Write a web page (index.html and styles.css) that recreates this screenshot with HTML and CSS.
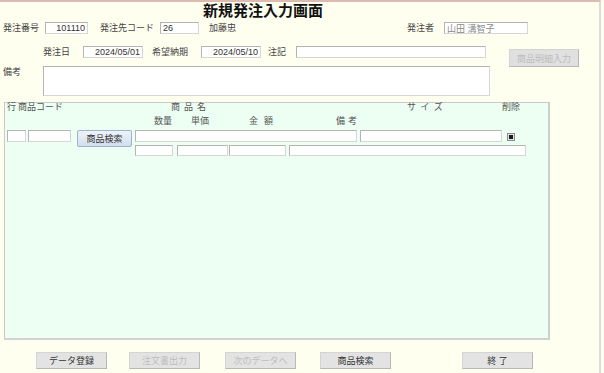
FILE: index.html
```html
<!DOCTYPE html>
<html>
<head>
    <title>新規発注入力画面</title>
    <link rel="stylesheet" href="styles.css">
</head>
<body>
    <div class="screen">
        <h1 class="title">新規発注入力画面</h1>

        <div class="row row-top">
            <span class="lbl l-orderno">発注番号</span>
            <input type="text" class="fld f-orderno num" value="101110">
            <span class="lbl l-supplier">発注先コード</span>
            <input type="text" class="fld f-supplier" value="26">
            <span class="lbl l-suppname">加藤忠</span>
            <span class="lbl l-person">発注者</span>
            <input type="text" class="fld f-person" value="山田 溝智子" readonly>
        </div>

        <div class="row row-date">
            <span class="lbl l-date">発注日</span>
            <input type="text" class="fld f-date num" value="2024/05/01">
            <span class="lbl l-due">希望納期</span>
            <input type="text" class="fld f-date num" value="2024/05/10">
            <span class="lbl l-note">注記</span>
            <input type="text" class="fld f-note">
            <button class="btn btn-detail" disabled>商品明細入力</button>
        </div>

        <div class="row row-memo">
            <span class="lbl l-memo">備考</span>
            <textarea class="fld f-memo"></textarea>
        </div>

        <div class="panel">
            <div class="head head-a">
                <span class="h-line">行</span>
                <span class="h-code">商品コード</span>
                <span class="h-name">商品名</span>
                <span class="h-size">サイズ</span>
                <span class="h-del">削除</span>
            </div>
            <div class="head head-b">
                <span class="h-qty">数量</span>
                <span class="h-price">単価</span>
                <span class="h-amount">金額</span>
                <span class="h-memo">備考</span>
            </div>

            <div class="record">
                <input type="text" class="fld f-line">
                <input type="text" class="fld f-code">
                <button class="btn-search">商品検索</button>
                <div class="record-body">
                    <div class="rec-line">
                        <input type="text" class="fld f-name">
                        <input type="text" class="fld f-size">
                        <span class="chk"></span>
                    </div>
                    <div class="rec-line rec-line-2">
                        <input type="text" class="fld f-qty">
                        <input type="text" class="fld f-price">
                        <input type="text" class="fld f-amount">
                        <input type="text" class="fld f-rmemo">
                    </div>
                </div>
            </div>
        </div>

        <div class="footer">
            <button class="btn b-save">データ登録</button>
            <button class="btn b-print" disabled>注文書出力</button>
            <button class="btn b-next" disabled>次のデータへ</button>
            <button class="btn b-search">商品検索</button>
            <button class="btn b-close">終 了</button>
        </div>
    </div>
</body>
</html>
```

FILE: styles.css
```css
body {
    margin: 0;
    background: #fffff0;
    font-family: "Liberation Sans", "Noto Sans CJK JP", sans-serif;
    font-size: 9px;
    color: #444;
}

.screen {
    width: 601px;
    height: 373px;
    box-sizing: border-box;
    border-top: 2px solid #dfbab1;
    border-right: 2px solid #dcdcdc;
}

.title {
    margin: 0 0 0 203px;
    height: 20px;
    line-height: 18px;
    font-size: 15px;
    font-weight: bold;
    color: #111;
    letter-spacing: 0;
}

.row {
    display: flex;
    align-items: center;
    height: 12px;
}

.row > * {
    flex-shrink: 0;
}

.lbl {
    line-height: 12px;
    white-space: nowrap;
}

.fld {
    box-sizing: border-box;
    height: 12px;
    margin: 0;
    padding: 0 2px;
    border: 1px solid;
    border-color: #b4b4b4 #d6d6d6 #d6d6d6 #b4b4b4;
    background: #fff;
    font-family: "Liberation Sans", "Noto Sans CJK JP", sans-serif;
    font-size: 9px;
    line-height: 10px;
    color: #333;
    outline: none;
}

.num {
    text-align: right;
}

/* header rows */
.l-orderno { margin-left: 3px; width: 42px; }
.f-orderno { width: 43px; }
.l-supplier { margin-left: 12px; width: 60px; }
.f-supplier { width: 39px; }
.l-suppname { margin-left: 10px; width: 30px; }
.l-person { margin-left: 168px; width: 37px; }
.f-person { width: 84px; color: #8a8a8a; }

.row-date {
    margin-top: 12px;
}

.l-date { margin-left: 43px; width: 40px; }
.f-date { width: 60px; }
.l-due { margin-left: 9px; width: 49px; }
.l-note { margin-left: 7px; width: 28px; }
.f-note { width: 190px; }

.btn {
    box-sizing: border-box;
    height: 17px;
    padding: 0;
    border: 1px solid;
    border-color: #d4d4d4 #b8b8b8 #b8b8b8 #d4d4d4;
    background: #e3e3e3;
    font-family: "Liberation Sans", "Noto Sans CJK JP", sans-serif;
    font-size: 9px;
    color: #333;
    cursor: pointer;
}

.btn:disabled {
    color: #bdbdbd;
    cursor: default;
}

.btn-detail {
    align-self: flex-start;
    margin-top: 3px;
    margin-left: 23px;
    width: 70px;
    height: 18px;
    background: #e0e0e0;
}

.row-memo {
    align-items: flex-start;
    margin-top: 8px;
    height: 30px;
}

.l-memo { margin-left: 3px; width: 40px; }

.f-memo {
    width: 447px;
    height: 30px;
    resize: none;
}

/* detail panel */
.panel {
    box-sizing: border-box;
    margin: 6px 0 0 4px;
    width: 546px;
    height: 238px;
    background: #ecfff2;
    border: 1px solid #c8c8c8;
    border-right: 2px solid #cfcfcf;
    border-bottom: 2px solid #d2d2d2;
}

.head {
    display: flex;
    height: 12px;
    line-height: 9px;
    white-space: nowrap;
    color: #555;
}

.head > span {
    flex-shrink: 0;
}

.head-b {
    height: 13px;
    line-height: 12px;
}

.h-line { margin-left: 2px; width: 11px; }
.h-code { width: 49px; }
.h-name { margin-left: 104px; width: 40px; letter-spacing: 4px; }
.h-size { margin-left: 196px; width: 50px; letter-spacing: 4.5px; }
.h-del { margin-left: 45px; }

.h-qty { margin-left: 149px; width: 18px; }
.h-price { margin-left: 19px; width: 18px; }
.h-amount { margin-left: 40px; width: 30px; letter-spacing: 6px; }
.h-memo { margin-left: 57px; letter-spacing: 3px; }

.record {
    display: flex;
    align-items: flex-start;
    margin: 2px 0 0 2px;
}

.record > *, .rec-line > * {
    flex-shrink: 0;
}

.f-line { width: 19px; }
.f-code { margin-left: 2px; width: 43px; }

.btn-search {
    box-sizing: border-box;
    margin-left: 6px;
    width: 55px;
    height: 17px;
    padding: 0;
    border: 1px solid #9fb2cc;
    border-radius: 2px;
    background: linear-gradient(to bottom, #eef3fa, #d3deec);
    font-family: "Liberation Sans", "Noto Sans CJK JP", sans-serif;
    font-size: 9px;
    color: #333;
    cursor: pointer;
}

.record-body {
    margin-left: 3px;
}

.rec-line {
    display: flex;
    align-items: flex-start;
}

.rec-line-2 {
    margin-top: 3px;
}

.rec-line-2 .fld {
    height: 11px;
}

.f-name { width: 222px; }
.f-size { margin-left: 3px; width: 142px; }

.chk {
    box-sizing: border-box;
    margin: 3px 0 0 5px;
    width: 8px;
    height: 8px;
    border: 1px solid #8a8a8a;
    background: #e4e4e4;
    padding: 1px;
}

.chk::after {
    content: "";
    display: block;
    width: 4px;
    height: 4px;
    background: #1a1a1a;
}

.f-qty { width: 38px; }
.f-price { margin-left: 4px; width: 51px; }
.f-amount { margin-left: 1px; width: 57px; }
.f-rmemo { margin-left: 3px; width: 237px; }

/* bottom buttons */
.footer {
    display: flex;
    margin-top: 12px;
}

.footer .btn {
    flex-shrink: 0;
    width: 71px;
}

.b-save { margin-left: 36px; }
.b-print { margin-left: 22px; }
.b-next { margin-left: 25px; }
.b-search { margin-left: 24px; }
.b-close { margin-left: 71px; }
```
